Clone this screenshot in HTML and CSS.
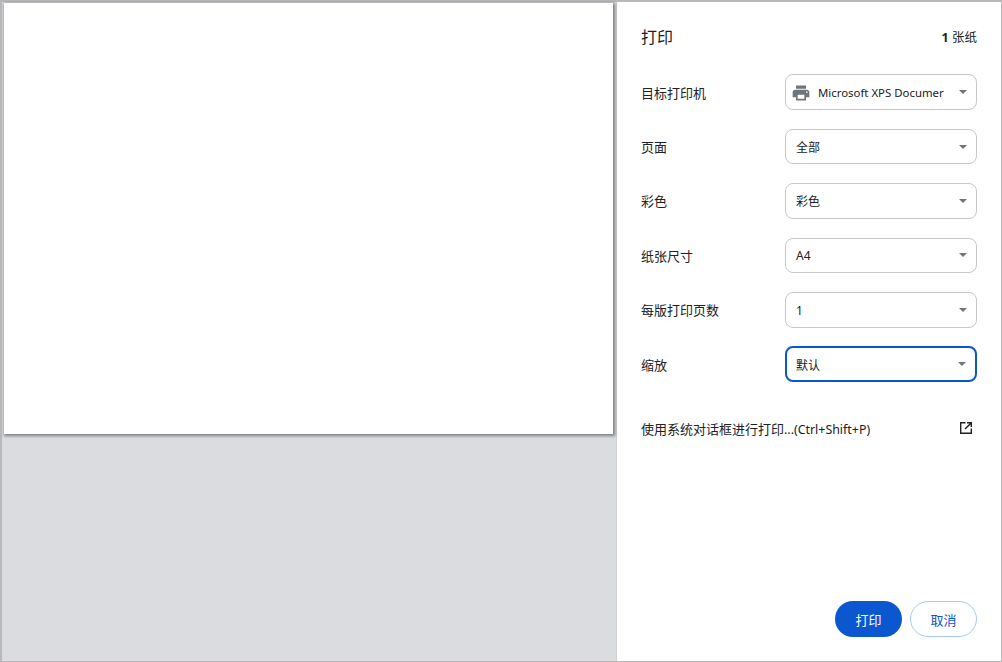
FILE: index.html
```html
<!DOCTYPE html>
<html lang="zh-CN">
<head>
  <meta charset="UTF-8" />
  <title>打印</title>
  <link rel="stylesheet" href="styles.css">
</head>
<body>
  <div class="window">
    <div class="preview">
      <div class="paper"></div>
    </div>
    <div class="sidebar">
      <div class="header">
        <h1>打印</h1>
        <span class="sheets"><b>1</b> 张纸</span>
      </div>

      <div class="settings">
        <div class="row">
          <label>目标打印机</label>
          <div class="select">
            <svg class="printer" viewBox="0 0 24 24" width="20" height="20"><path d="M19 8H5c-1.66 0-3 1.34-3 3v6h4v4h12v-4h4v-6c0-1.66-1.34-3-3-3zm-3 11H8v-5h8v5zm3-7c-.55 0-1-.45-1-1s.45-1 1-1 1 .45 1 1-.45 1-1 1zm-1-9H6v4h12V3z"/></svg>
            <span class="value dest">Microsoft XPS Documer</span>
            <i class="arrow"></i>
          </div>
        </div>
        <div class="row">
          <label>页面</label>
          <div class="select"><span class="value">全部</span><i class="arrow"></i></div>
        </div>
        <div class="row">
          <label>彩色</label>
          <div class="select"><span class="value">彩色</span><i class="arrow"></i></div>
        </div>
        <div class="row">
          <label>纸张尺寸</label>
          <div class="select"><span class="value">A4</span><i class="arrow"></i></div>
        </div>
        <div class="row">
          <label>每版打印页数</label>
          <div class="select"><span class="value">1</span><i class="arrow"></i></div>
        </div>
        <div class="row">
          <label>缩放</label>
          <div class="select focused"><span class="value">默认</span><i class="arrow"></i></div>
        </div>
      </div>

      <div class="system-link">
        <span>使用系统对话框进行打印<span class="shortcut">...(Ctrl+Shift+P)</span></span>
        <svg viewBox="0 0 14 14" width="14" height="14"><path d="M1 1h5.5v1.4H2.4v9.2h9.2V7.5H13V13H1V1zM8 1h5v5h-1.4V3.4L6.5 8.5l-1-1 5.1-5.1H8z"/></svg>
      </div>

      <div class="buttons">
        <button class="primary">打印</button>
        <button class="secondary">取消</button>
      </div>
    </div>
  </div>
</body>
</html>
```

FILE: styles.css
```css
html, body {
  margin: 0;
  height: 100%;
  overflow: hidden;
}

body {
  font-family: "Noto Sans", "Noto Sans CJK SC", sans-serif;
  font-size: 13px;
  color: #202124;
  background-color: #ffffff;
}

.window {
  box-sizing: border-box;
  display: flex;
  width: 1002px;
  height: 662px;
  border: 1px solid #b9b9b9;
  border-top-width: 2px;
  border-left-width: 2px;
}

.preview {
  box-sizing: border-box;
  width: 615px;
  padding: 1px 0 0 2px;
  background-color: #dadce0;
  border-right: 1px solid #d0d0d0;
}

.paper {
  width: 609px;
  height: 431px;
  background-color: #ffffff;
  box-shadow: 1px 1px 3px 1px rgba(60, 64, 67, 0.6);
}

.sidebar {
  flex: 1;
  display: flex;
  flex-direction: column;
  padding: 0 24px;
}

.header {
  display: flex;
  justify-content: space-between;
  align-items: center;
  height: 68px;
}

h1 {
  margin: 0;
  font-size: 16px;
  font-weight: 400;
}

.sheets {
  font-size: 12.5px;
}

.sheets b {
  font-weight: 700;
}

.settings {
  display: flex;
  flex-direction: column;
  gap: 20px;
  margin-top: 5px;
}

.row {
  display: flex;
  justify-content: space-between;
  align-items: center;
  height: 34.4px;
}

.select {
  box-sizing: border-box;
  position: relative;
  display: flex;
  align-items: center;
  width: 192px;
  height: 35.5px;
  padding: 1px 10px 0;
  border: 1px solid #c6c8cc;
  border-radius: 8px;
}

.select.focused {
  border: 2px solid #0b57d0;
  height: 36.5px;
  padding: 1px 9px 0;
}

.printer {
  margin: 0 0 0 -5px;
  fill: #70757a;
}

.value {
  white-space: nowrap;
  font-size: 12px;
}

.dest {
  margin-left: 7px;
  font-size: 11.4px;
}

.arrow {
  position: absolute;
  right: 9px;
  top: 50%;
  margin-top: -2px;
  border-left: 4px solid transparent;
  border-right: 4px solid transparent;
  border-top: 4px solid #70757a;
}

.system-link {
  display: flex;
  justify-content: space-between;
  align-items: center;
  margin-top: 30px;
  padding-right: 4px;
  height: 34px;
}

.shortcut {
  font-size: 12.4px;
}

.system-link svg {
  fill: #202124;
}

.buttons {
  margin-top: auto;
  margin-bottom: 24px;
  display: flex;
  justify-content: flex-end;
  gap: 8px;
}

button {
  box-sizing: border-box;
  width: 67px;
  height: 36px;
  border-radius: 18px;
  font-family: inherit;
  font-size: 13px;
  cursor: pointer;
}

.primary {
  background-color: #0b57d0;
  border: none;
  color: #ffffff;
}

.secondary {
  background-color: #ffffff;
  border: 1px solid #a8c7fa;
  color: #0b57d0;
}
```
